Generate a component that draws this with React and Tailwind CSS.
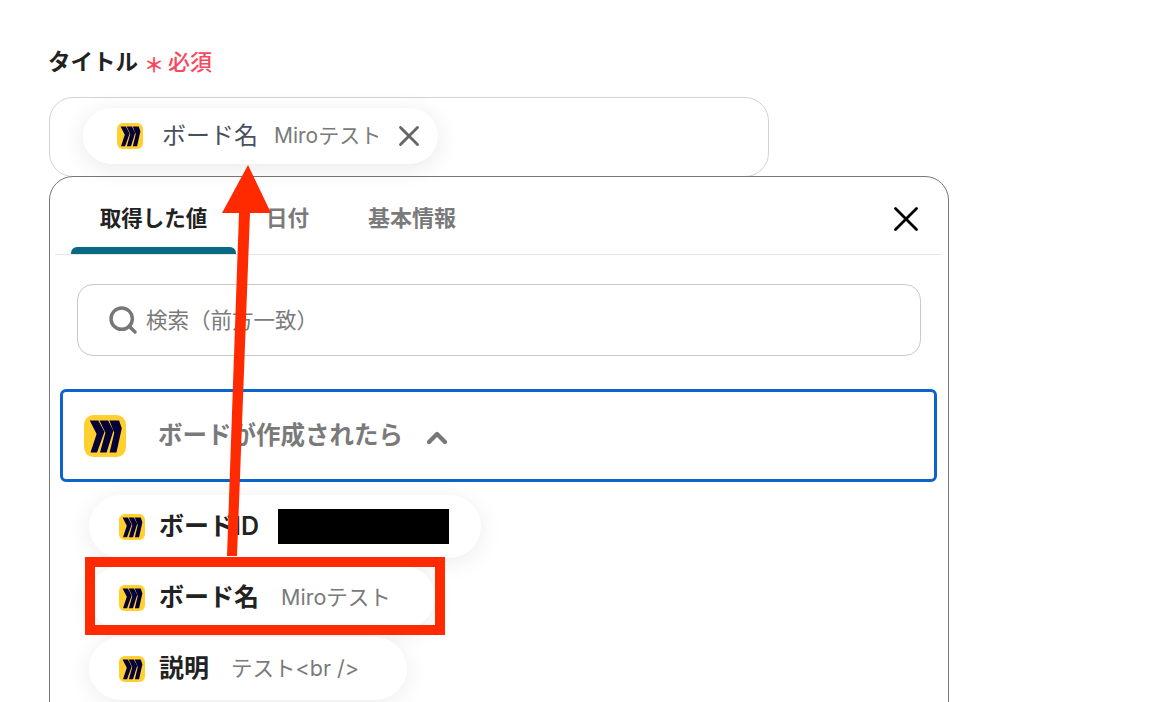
import { Search, ChevronUp, X } from 'lucide-react';

function MiroIcon({ size }) {
  return (
    <svg width={size} height={size} viewBox="0 0 40 40" className="shrink-0">
      <rect width="40" height="40" rx="9" fill="#FFD02F" />
      <path fill="#050038" d="M5.5 5.2H13.6L19.5 16 12.4 35.8H6.2L12 18z" />
      <path fill="#050038" d="M14.8 5.2H23L28 15 21.5 35.8H15.2L20.4 17z" />
      <path fill="#050038" d="M24.2 5.2H33.4L36 12.7 30.9 35.8H24.4L28.8 17z" />
    </svg>
  );
}

function ValuePill({ label, value, className, children }) {
  return (
    <div className={`flex items-center rounded-full bg-white shadow-[0_4px_24px_rgba(0,0,0,0.08)] ${className}`}>
      <MiroIcon size={26} />
      <span className="ml-[14px] text-[25px] font-semibold text-[#222]">{label}</span>
      {value && <span className="ml-[22px] text-[21.5px] text-[#7a7a7a]">{value}</span>}
      {children}
    </div>
  );
}

export default function App() {
  return (
    <div
      className="relative h-[702px] w-[1174px] overflow-hidden bg-white pl-[49px] pt-[44px]"
      style={{ fontFamily: 'Inter, "Noto Sans CJK JP", sans-serif' }}
    >
      {/* Label */}
      <div className="flex h-[36px] items-center">
        <span className="-ml-px text-[22.5px] font-bold text-[#222]">タイトル</span>
        <span className="ml-[6px] mt-[8px] text-[20px] font-bold leading-none text-[#f8485e]">＊</span>
        <span className="ml-[4px] text-[22px] font-medium text-[#f8485e]">必須</span>
      </div>

      {/* Input */}
      <div className="mt-[17px] flex h-[80px] w-[720px] items-start rounded-[24px] border border-[#cfd3da] pl-[33px] pt-[10px]">
        <div className="flex h-[56px] w-[355px] items-center rounded-full bg-white pl-[34px] shadow-[0_4px_24px_rgba(0,0,0,0.09)]">
          <MiroIcon size={26} />
          <span className="ml-[19px] text-[24px] text-[#47505c]">ボード名</span>
          <span className="ml-[16px] text-[21px] text-[#7a7a7a]">Miroテスト</span>
          <X size={34} strokeWidth={2} className="ml-[11px] shrink-0 text-[#666]" />
        </div>
      </div>

      {/* Panel */}
      <div className="-mt-px h-[560px] w-[900px] rounded-t-[24px] border border-[#777] bg-white pl-[5px] pr-[6px]">
        <div className="relative flex h-[78px] items-start border-b border-[#e6e6e6] pl-[16px]">
          <div className="flex h-[77px] w-[165px] flex-col items-center justify-between">
            <span className="mt-[23px] text-[21.5px] font-bold leading-[36px] text-[#222]">取得した値</span>
            <div className="h-[7px] w-full rounded-t-[6px] bg-[#076a82]" />
          </div>
          <span className="ml-[30px] mt-[23px] text-[21.5px] font-bold leading-[36px] text-[#7a7a7a]">日付</span>
          <span className="ml-[59px] mt-[23px] text-[22px] font-bold leading-[36px] text-[#7a7a7a]">基本情報</span>
          <X size={42} strokeWidth={1.6} className="ml-auto mr-[15px] mt-[21px] text-black" />
        </div>

        {/* Search */}
        <div className="ml-[22px] mt-[29px] flex h-[72px] w-[844px] items-center rounded-[16px] border border-[#c9c9c9] pl-[29px]">
          <Search size={32} strokeWidth={2.6} className="text-[#777]" />
          <span className="ml-[7px] text-[21.5px] text-[#7a7a7a]">検索（前方一致）</span>
        </div>

        {/* Group header */}
        <div className="ml-[5px] mt-[33px] flex h-[93px] w-[877px] items-center rounded-[6px] border-[3px] border-[#0b63ce] pl-[21px]">
          <MiroIcon size={42} />
          <span className="ml-[32px] text-[24.5px] font-bold text-[#7a7a7a]">ボードが作成されたら</span>
          <ChevronUp size={32} strokeWidth={3.2} className="ml-[18px] mt-[4px] text-[#777]" />
        </div>

        {/* Values */}
        <div className="ml-[34px] mt-[13px] flex flex-col items-start">
          <ValuePill label="ボードID" className="h-[63px] w-[392px] pl-[30px]">
            <div className="ml-[19px] h-[35px] w-[171px] bg-black" />
          </ValuePill>
          <ValuePill label="ボード名" value="Miroテスト" className="mt-[8px] h-[63px] w-[346px] pl-[30px]" />
          <ValuePill label="説明" value="テスト<br />" className="mt-[8px] h-[63px] w-[318px] pl-[30px]" />
        </div>
      </div>

      {/* Annotation */}
      <div className="absolute left-[85px] top-[557px] h-[78px] w-[360px] border-[10px] border-[#ff2a00]" />
      <svg className="absolute left-0 top-0" width="1174" height="702">
        <polygon fill="#ff2a00" points="248,165 222,213 239,213 227,556 237,556 250,213 271,213" />
      </svg>
    </div>
  );
}
